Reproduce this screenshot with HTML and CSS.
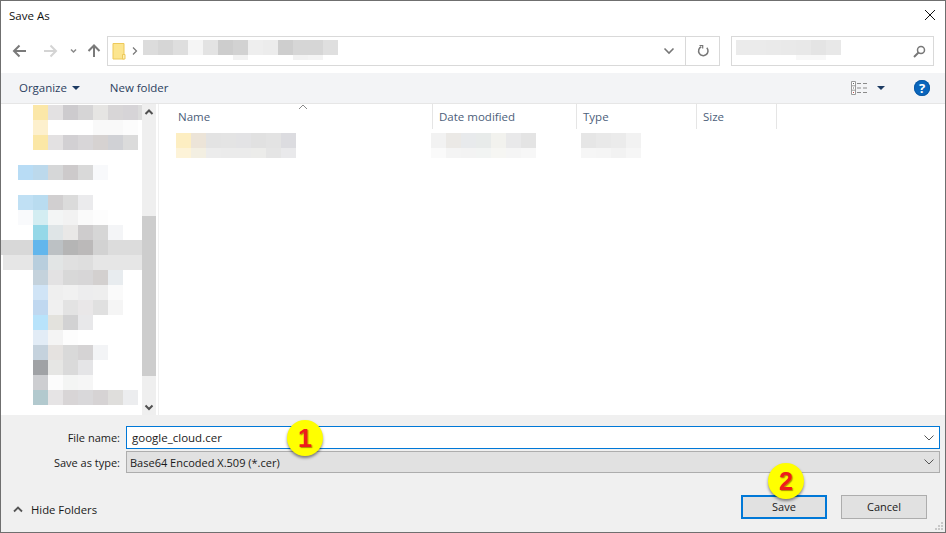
FILE: index.html
```html
<!DOCTYPE html>
<html lang="en">
<head>
<meta charset="utf-8">
<title>Save As</title>
<link rel="stylesheet" href="styles.css">
</head>
<body>
<div class="window">
  <header class="titlebar">
    <span class="title">Save As</span>
    <svg class="close" width="12" height="12" viewBox="0 0 12 12"><path d="M1 1L11 11M11 1L1 11" stroke="#111" stroke-width="1" fill="none"/></svg>
  </header>

  <div class="navbar">
    <svg class="nav-icons" width="106" height="30" viewBox="0 0 106 30">
      <path d="M13 15H25M18.500 9.500L13 15L18.500 20.500" stroke="#7a7a7a" stroke-width="2" fill="none"/>
      <path d="M43 15H55M49.500 9.500L55 15L49.500 20.500" stroke="#d4d4d4" stroke-width="2" fill="none"/>
      <path d="M70 13.500L72.500 16L75 13.500" stroke="#8a8a8a" stroke-width="1.500" fill="none"/>
      <path d="M93 21V9.500M87.500 15L93 9.500L98.500 15" stroke="#7a7a7a" stroke-width="2" fill="none"/>
    </svg>
    <div class="address">
      <svg class="folder" width="14" height="18" viewBox="0 0 14 18"><path d="M1 1.500H12V17H1Z" fill="#fce58f" stroke="#edc95a"/><path d="M10.500 12.500H13V17H10.500Z" fill="#fdf0b8" stroke="#edc95a"/></svg>
      <svg class="crumb-sep" width="6" height="8" viewBox="0 0 6 8"><path d="M1 .5L4.500 4L1 7.500" stroke="#777" stroke-width="1.200" fill="none"/></svg>
      <svg class="mosaic path-mosaic" width="195" height="20" viewBox="0 0 195 20">
        <rect x="0" fill="#dcdcdc"/><rect x="15" fill="#d6d6d6"/><rect x="30" fill="#dedede"/><rect x="45" fill="#f5f5f5"/><rect x="60" fill="#e3e3e3"/><rect x="75" fill="#cdcdcd"/><rect x="90" fill="#d2d2d2"/><rect x="105" fill="#eeeeee"/><rect x="120" fill="#ececec"/><rect x="135" fill="#cecece"/><rect x="150" fill="#d6d6d6"/><rect x="165" fill="#d6d6d6"/><rect x="180" fill="#dfdfdf"/>
        <rect class="stub" x="90" y="15" fill="#f2f2f2"/><rect class="stub" x="150" y="15" fill="#f2f2f2"/><rect class="stub" x="165" y="15" fill="#f4f4f4"/>
      </svg>
      <span class="spacer"></span>
      <svg class="addr-chevron" width="12" height="8" viewBox="0 0 12 8"><path d="M1.500 1.500L6 6L10.500 1.500" stroke="#777" stroke-width="1.600" fill="none"/></svg>
      <span class="refresh">
        <svg width="12" height="12" viewBox="0 0 12 12"><path d="M4.300 1.700A4.700 4.700 0 1 0 9.800 2.800" stroke="#777" stroke-width="1.500" fill="none"/><path d="M2.500 .5H5.700V3.500" stroke="#777" stroke-width="1.200" fill="none"/></svg>
      </span>
    </div>
    <div class="search">
      <svg class="mosaic search-mosaic" width="105" height="20" viewBox="0 0 105 20">
        <rect x="0" fill="#ebebeb"/><rect x="15" fill="#ebebeb"/><rect x="30" fill="#eaeaea"/><rect x="45" fill="#e9e9e9"/><rect x="60" fill="#e8e8e8"/><rect x="75" fill="#e4e4e4"/><rect x="90" fill="#e8e8e8"/>
        <rect class="stub" x="60" y="15" fill="#f8f8f8"/><rect class="stub" x="75" y="15" fill="#f8f8f8"/>
      </svg>
      <span class="spacer"></span>
      <svg class="search-icon" width="13" height="13" viewBox="0 0 13 13"><circle cx="8" cy="5" r="3.500" stroke="#777" stroke-width="1.500" fill="none"/><path d="M5.500 7.500L1 12" stroke="#777" stroke-width="2" fill="none"/></svg>
    </div>
  </div>

  <div class="toolbar">
    <span class="tool">Organize</span>
    <span class="caret organize-caret"></span>
    <span class="tool new-folder">New folder</span>
    <span class="spacer"></span>
    <svg class="view-icon" width="16" height="14" viewBox="0 0 16 14">
      <path d="M.5.500H4.500V13.500H.5ZM.5 4.800H4.500M.5 9.200H4.500" stroke="#9a9a9a" fill="#fff"/>
      <path d="M2 2H3V3H2Z" fill="#666"/><path d="M2 6.500H3V7.500H2Z" fill="#666"/><path d="M2 11H3V12H2Z" fill="#c0504d"/>
      <path d="M6 2.500H10M12 2.500H16M6 7H10M12 7H16M6 11.500H10M12 11.500H16" stroke="#8a8a8a"/>
    </svg>
    <span class="caret view-caret"></span>
    <span class="help">?</span>
  </div>

  <main class="main">
    <aside class="sidebar">
      <svg class="mosaic tree" width="141" height="311" viewBox="1 104 141 311">
        <g transform="translate(0 105)"><rect x="33" fill="#fbe7a8"/><rect x="48" fill="#e3e1e2"/><rect x="63" fill="#cdcbce"/><rect x="78" fill="#d6d5d6"/><rect x="93" fill="#e6e5e3"/><rect x="108" fill="#d8d6d7"/><rect x="123" fill="#d6d4d7"/><rect x="138" fill="#dcdcdc"/></g>
        <g transform="translate(0 120)"><rect x="33" fill="#fdf0cd"/><rect x="93" fill="#f9f9f9"/><rect x="108" fill="#f9f9f9"/><rect x="123" fill="#fcfcfc"/></g>
        <g transform="translate(0 135)"><rect x="33" fill="#fbe7a6"/><rect x="48" fill="#e3e1e2"/><rect x="63" fill="#d2d0d3"/><rect x="78" fill="#d8d6d8"/><rect x="93" fill="#d6d2d1"/><rect x="108" fill="#d0d1d5"/><rect x="123" fill="#dbdbdb"/></g>
        <g transform="translate(0 165)"><rect x="18" fill="#b8dcf5"/><rect x="33" fill="#bcd9ec"/><rect x="48" fill="#d6d7d8"/><rect x="63" fill="#cdcacb"/><rect x="78" fill="#d9d9d9"/><rect x="93" fill="#f8f9fb"/></g>
        <g transform="translate(0 195)"><rect x="18" fill="#c0e0f4"/><rect x="33" fill="#b9dcf0"/><rect x="48" fill="#d1cfd0"/><rect x="63" fill="#dbdbdb"/><rect x="78" fill="#ebebed"/></g>
        <g transform="translate(0 210)"><rect x="18" fill="#f9fafc"/><rect x="33" fill="#d3edf2"/><rect x="48" fill="#f3f5f5"/><rect x="63" fill="#f2f2f2"/><rect x="78" fill="#fafafa"/><rect x="93" fill="#fdfdfd"/></g>
        <g transform="translate(0 225)"><rect x="33" fill="#95d8e8"/><rect x="48" fill="#dfe5e7"/><rect x="63" fill="#e9e8e7"/><rect x="78" fill="#cecccd"/><rect x="93" fill="#d6d6d6"/><rect x="108" fill="#f4f5f7"/></g>
        <g transform="translate(0 240)"><rect x="0" fill="#d8d8d8"/><rect x="15" fill="#d8d8d8"/><rect x="18" fill="#d8d8d8"/><rect x="33" fill="#62b6ec"/><rect x="48" fill="#bcc1c4"/><rect x="63" fill="#b5b5b5"/><rect x="78" fill="#bbb9b9"/><rect x="93" fill="#d2d2d2"/><rect x="108" fill="#dcdcdc"/><rect x="123" fill="#dcdcdc"/><rect x="138" fill="#dcdcdc"/></g>
        <g transform="translate(0 255)"><rect x="3" fill="#e6e6e6"/><rect x="18" fill="#e6e6e6"/><rect x="33" fill="#b8cedd"/><rect x="48" fill="#e2e5e5"/><rect x="63" fill="#e0e0e0"/><rect x="78" fill="#dedede"/><rect x="93" fill="#e6e6e6"/><rect x="108" fill="#e6e6e6"/><rect x="123" fill="#e6e6e6"/><rect x="138" fill="#e6e6e6"/></g>
        <g transform="translate(0 270)"><rect x="33" fill="#c4d2dc"/><rect x="48" fill="#e3e2e3"/><rect x="63" fill="#d8d8d8"/><rect x="78" fill="#d7d6d7"/><rect x="93" fill="#d3d0cf"/><rect x="108" fill="#e8ecef"/></g>
        <g transform="translate(0 285)"><rect x="33" fill="#d0e4f6"/><rect x="48" fill="#efefef"/><rect x="63" fill="#f1f1f1"/><rect x="78" fill="#ededee"/><rect x="93" fill="#eeeeee"/><rect x="108" fill="#fafafa"/></g>
        <g transform="translate(0 300)"><rect x="33" fill="#c0d8f0"/><rect x="48" fill="#f0f0f0"/><rect x="63" fill="#e3e3e3"/><rect x="78" fill="#e9e7e8"/><rect x="93" fill="#e0e0e0"/><rect x="108" fill="#f5f5f5"/></g>
        <g transform="translate(0 315)"><rect x="33" fill="#b8e3fb"/><rect x="48" fill="#e3e2dd"/><rect x="63" fill="#d2d2d3"/><rect x="78" fill="#e8e8ea"/></g>
        <g transform="translate(0 330)"><rect x="33" fill="#e2ecf6"/><rect x="48" fill="#f4f4f4"/><rect x="63" fill="#fdfdfd"/></g>
        <g transform="translate(0 345)"><rect x="33" fill="#c5d2dd"/><rect x="48" fill="#e5e2e0"/><rect x="63" fill="#d9d9d9"/><rect x="78" fill="#d5d3d4"/><rect x="93" fill="#f3f4f6"/></g>
        <g transform="translate(0 360)"><rect x="33" fill="#a0a2a5"/><rect x="48" fill="#e6e6e4"/><rect x="63" fill="#dadada"/><rect x="78" fill="#e5e5e7"/></g>
        <g transform="translate(0 375)"><rect x="33" fill="#cdced1"/><rect x="48" fill="#fcfcfc"/><rect x="63" fill="#f4f5f4"/><rect x="78" fill="#f6f6f6"/></g>
        <g transform="translate(0 390)"><rect x="33" fill="#b2c9ce"/><rect x="48" fill="#e6e4e5"/><rect x="63" fill="#d8d5d6"/><rect x="78" fill="#d9d8da"/><rect x="93" fill="#d6d3d4"/><rect x="108" fill="#dfdedc"/><rect x="123" fill="#ecedef"/></g>
      </svg>
      <div class="scrollbar">
        <svg class="scroll-arrow" width="14" height="17" viewBox="0 0 14 17"><path d="M3.500 10L7 6.500L10.500 10" stroke="#505050" stroke-width="2" fill="none"/></svg>
        <div class="scroll-track"></div>
        <svg class="scroll-arrow" width="14" height="17" viewBox="0 0 14 17"><path d="M3.500 7.500L7 11L10.500 7.500" stroke="#505050" stroke-width="2" fill="none"/></svg>
      </div>
    </aside>
    <section class="list">
      <svg class="sort-caret" width="10" height="6" viewBox="0 0 10 6"><path d="M1 5L5 1L9 5" stroke="#8a8a8a" fill="none"/></svg>
      <div class="columns">
        <span class="col col-name">Name</span>
        <span class="col col-date">Date modified</span>
        <span class="col col-type">Type</span>
        <span class="col col-size">Size</span>
      </div>
      <div class="file-row">
        <svg class="mosaic file-name" width="120" height="25" viewBox="0 0 120 25">
          <rect x="0" fill="#fdeec2"/><rect x="15" fill="#ece4d8"/><rect x="30" fill="#e3e3e3"/><rect x="45" fill="#e4e4e4"/><rect x="60" fill="#e3e3e5"/><rect x="75" fill="#e1e1e1"/><rect x="90" fill="#e3e3e3"/><rect x="105" fill="#dcdce0"/>
          <g transform="translate(0 15)"><rect class="low" x="0" fill="#fdf3d8"/><rect class="low" x="15" fill="#f3efe2"/><rect class="low" x="30" fill="#ececec"/><rect class="low" x="45" fill="#ebebeb"/><rect class="low" x="60" fill="#ebebeb"/><rect class="low" x="75" fill="#ececea"/><rect class="low" x="90" fill="#e5e5e5"/><rect class="low" x="105" fill="#e9e9eb"/></g>
        </svg>
        <svg class="mosaic file-date" width="105" height="25" viewBox="0 0 105 25">
          <rect x="0" fill="#f2f2f2"/><rect x="15" fill="#ebe9e6"/><rect x="30" fill="#e8eaec"/><rect x="45" fill="#e8ebea"/><rect x="60" fill="#f2f2ee"/><rect x="75" fill="#e9e9ea"/><rect x="90" fill="#e4e4e4"/>
          <g transform="translate(0 15)"><rect class="low" x="0" fill="#fafafa"/><rect class="low" x="15" fill="#f4f4f4"/><rect class="low" x="30" fill="#f3f3f3"/><rect class="low" x="45" fill="#f2f4f3"/><rect class="low" x="60" fill="#f6f6f3"/><rect class="low" x="75" fill="#f5f5f5"/><rect class="low" x="90" fill="#f7f7f7"/></g>
        </svg>
        <svg class="mosaic file-type" width="60" height="25" viewBox="0 0 60 25">
          <rect x="0" fill="#e6e6e6"/><rect x="15" fill="#e9e9e9"/><rect x="30" fill="#ebebeb"/><rect x="45" fill="#f2f2f2"/>
          <g transform="translate(0 15)"><rect class="low" x="0" fill="#f6f6f6"/><rect class="low" x="15" fill="#f5f5f5"/><rect class="low" x="30" fill="#f2f2f2"/><rect class="low" x="45" fill="#f6f6f6"/></g>
        </svg>
      </div>
    </section>
  </main>

  <footer class="footer">
    <div class="form">
      <label class="form-label">File name:</label>
      <div class="field field-active">
        <span class="field-text field-text-name">google_cloud.cer</span>
        <svg class="field-chevron" width="10" height="6" viewBox="0 0 10 6"><path d="M.5.500L5 5L9.500.500" stroke="#555" fill="none"/></svg>
      </div>
      <label class="form-label">Save as type:</label>
      <div class="field field-select">
        <span class="field-text">Base64 Encoded X.509 (*.cer)</span>
        <svg class="field-chevron" width="10" height="6" viewBox="0 0 10 6"><path d="M.5.500L5 5L9.500.500" stroke="#555" fill="none"/></svg>
      </div>
    </div>
    <div class="actions">
      <svg class="hide-chevron" width="10" height="7" viewBox="0 0 10 7"><path d="M1 5.500L5 1.500L9 5.500" stroke="#555" stroke-width="1.800" fill="none"/></svg>
      <span class="hide-label">Hide Folders</span>
      <span class="spacer"></span>
      <button class="btn btn-default">Save</button>
      <button class="btn">Cancel</button>
    </div>
    <svg class="grip" width="10" height="10" viewBox="0 0 10 10"><path d="M7 1h2v2H7zM4 4h2v2H4zM7 4h2v2H7zM1 7h2v2H1zM4 7h2v2H4zM7 7h2v2H7z" fill="#c8c8c8"/></svg>
  </footer>

  <span class="badge badge-one">1</span>
  <span class="badge badge-two">2</span>
</div>
</body>
</html>
```

FILE: styles.css
```css
* { box-sizing: border-box; }
html, body { margin: 0; padding: 0; background: #fff; }
body { width: 946px; height: 533px; overflow: hidden; font-family: "Open Sans", "Noto Sans", sans-serif; font-size: 11.500px; color: #1a1a1a; }
svg { display: block; flex: none; }
.spacer { flex: 1; }

.window { position: relative; width: 946px; height: 533px; border: 1px solid #6f6f6f; display: flex; flex-direction: column; background: #fff; }

.titlebar { height: 30px; display: flex; align-items: center; justify-content: space-between; padding: 0 9px 2px 8px; }
.title { font-size: 11.500px; color: #111; }

.navbar { height: 42px; display: flex; align-items: flex-start; padding-top: 5px; }
.address { width: 613px; height: 30px; border: 1px solid #d9d9d9; display: flex; align-items: center; padding-left: 4px; }
.crumb-sep { margin-left: 6px; margin-right: 5px; }
.path-mosaic { align-self: flex-start; margin-top: 3px; }
.mosaic { shape-rendering: crispEdges; }
.mosaic rect { width: 15px; height: 15px; }
.mosaic rect.stub { height: 5px; }
.mosaic rect.low { height: 10px; }
.addr-chevron { margin-right: 10px; }
.refresh { width: 34px; height: 28px; border-left: 1px solid #d9d9d9; display: flex; align-items: center; justify-content: center; }
.search { width: 203px; height: 30px; margin-left: 11px; border: 1px solid #d9d9d9; display: flex; align-items: center; padding: 0 7px 0 4px; }
.search-mosaic { align-self: flex-start; margin-top: 3px; }

.toolbar { height: 31px; background: #f3f4f6; border-bottom: 1px solid #e6e6e6; display: flex; align-items: center; padding: 0 15px 1px 18px; }
.tool { color: #2c4160; letter-spacing: -.03px; }
.caret { width: 0; height: 0; border-left: 4px solid transparent; border-right: 4px solid transparent; border-top: 4px solid #1c3a62; }
.organize-caret { margin-left: 5px; }
.new-folder { margin-left: 30px; }
.view-caret { margin-left: 10px; }
.help { width: 16px; height: 16px; border-radius: 50%; background: #0a66bd; color: #fff; font-weight: 700; font-size: 13px; line-height: 16px; text-align: center; margin-left: 29px; box-shadow: inset 0 0 0 1px #0b5aa6; }

.main { height: 311px; display: flex; }
.sidebar { width: 158px; display: flex; border-right: 1px solid #f0f0f0; }
.scrollbar { width: 14px; display: flex; flex-direction: column; background: #efefef; }
.scroll-track { flex: 1; position: relative; }
.scroll-track::after { content: ""; position: absolute; left: 0; right: 0; top: 95px; height: 160px; background: #cdcdcd; }

.list { position: relative; flex: 1; }
.sort-caret { position: absolute; left: 139px; top: 0; }
.columns { height: 25px; display: flex; }
.col { height: 25px; display: flex; align-items: center; padding-left: 6px; color: #4c607a; border-right: 1px solid #e5e5e5; }
.col-name { width: 274px; padding-left: 19px; }
.col-date { width: 144px; }
.col-type { width: 120px; }
.col-size { width: 80px; }
.file-row { display: flex; padding-top: 4px; }
.file-name { margin-left: 17px; }
.file-date { margin-left: 135px; }
.file-type { margin-left: 45px; }

.footer { position: relative; flex: 1; background: #f0f0f0; padding: 11px 5px 0 0; font-size: 11px; }
.form { display: grid; grid-template-columns: 119px 1fr; column-gap: 6px; row-gap: 2px; grid-template-rows: 23px 22px; }
.form-label { display: flex; align-items: center; justify-content: flex-end; color: #1a1a1a; }
.field { display: flex; align-items: center; justify-content: space-between; padding: 0 5px 0 3px; border: 1px solid #adadad; }
.field-active { border-color: #0078d7; background: #fff; }
.field-select { background: #e1e1e1; }
.field-text { color: #1a1a1a; }
.field-text-name { margin-left: 2px; font-size: 11.500px; }

.actions { margin-top: 22px; height: 24px; display: flex; align-items: center; gap: 14px; padding-right: 13px; }
.hide-chevron { margin-left: 12px; margin-top: 4px; }
.hide-label { margin-left: -6px; margin-top: 4px; font-size: 11.300px; color: #1a1a1a; }
.btn { width: 86px; height: 24px; background: #e1e1e1; border: 1px solid #adadad; padding: 0 0 2px; font: inherit; color: #1a1a1a; }
.btn-default { border: 2px solid #0078d7; }
.grip { position: absolute; right: 1px; bottom: 1px; }

.badge { position: absolute; width: 36px; height: 36px; border-radius: 50%; background: #ffff00; box-shadow: 0 2px 3px rgba(0, 0, 0, .45); color: #ee1c1c; font: 700 25px/36px "Liberation Sans", Arial, sans-serif; text-align: center; text-shadow: 1px 1px 1px rgba(110, 40, 0, .55); }
.badge-one { left: 286px; top: 419px; }
.badge-two { left: 767px; top: 462px; }
```
